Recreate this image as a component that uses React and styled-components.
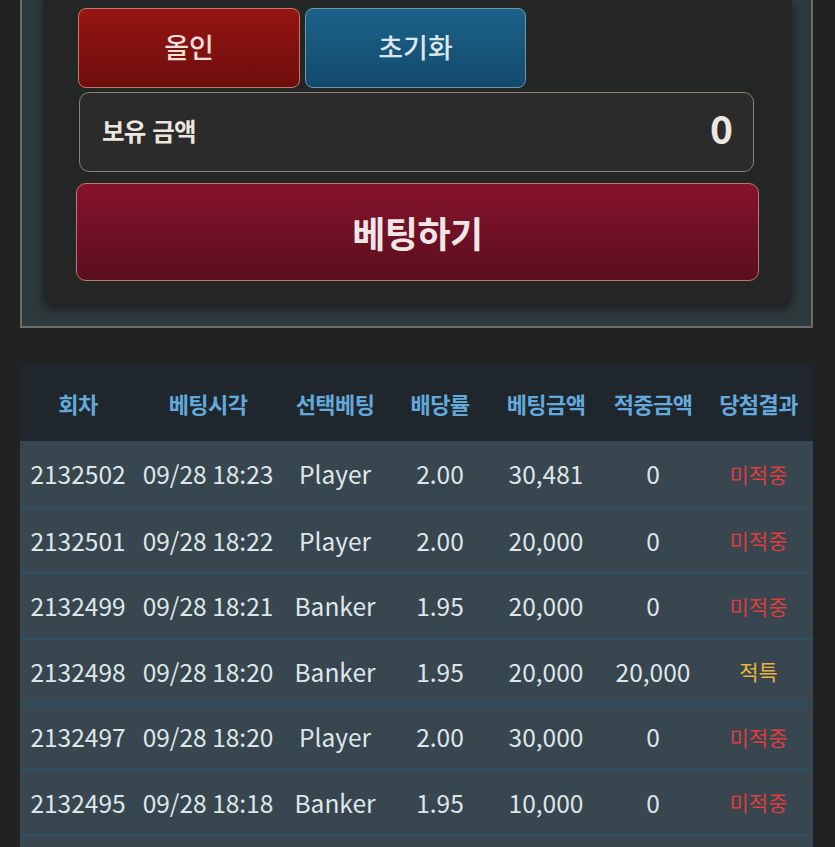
import React from "react";
import styled, { createGlobalStyle } from "styled-components";

const GlobalStyle = createGlobalStyle`
    html, body {
        margin: 0;
        padding: 0;
        background: #212322;
        font-family: "Noto Sans CJK KR", "Noto Sans", sans-serif;
        overflow: hidden;
    }
`;

const Page = styled.div`
    padding: 0 22px 0 20px;
`;

const OuterPanel = styled.div`
    background: #2f383b;
    border: 2px solid #6e6c68;
    border-top: none;
    padding: 0 19px 21px 21px;
`;

const InnerCard = styled.div`
    background: #232625;
    border-radius: 0 0 12px 12px;
    box-shadow: 0 4px 10px rgba(0, 0, 0, 0.45);
    padding: 8px 34px 24px 33px;
    display: flex;
    flex-direction: column;
`;

const ButtonRow = styled.div`
    display: flex;
    gap: 5px;
    padding-left: 2px;
`;

const SmallButton = styled.button`
    width: ${p => p.width}px;
    height: 80px;
    border-radius: 8px;
    border: 1.5px solid ${p => (p.variant === "red" ? "#c27a6e" : "#7397a8")};
    background: ${p =>
        p.variant === "red"
            ? "linear-gradient(180deg, #961512 0%, #6e0e0c 100%)"
            : "linear-gradient(180deg, #1c628a 0%, #124a6b 100%)"};
    color: ${p => (p.variant === "red" ? "#f4dfdb" : "#dbe6ec")};
    font-family: inherit;
    font-size: 27px;
    font-weight: 500;
    padding: 0;
    padding-bottom: 4px;
`;

const HoldingBox = styled.div`
    margin: 4px 4px 0 3px;
    height: 80px;
    box-sizing: border-box;
    border: 1.5px solid #8a8376;
    border-radius: 10px;
    background: #2a2b2a;
    display: flex;
    align-items: center;
    justify-content: space-between;
    padding: 0 20px 10px 22px;
    color: #ece6df;
`;

const HoldingLabel = styled.span`
    font-size: 24.5px;
    font-weight: 700;
    letter-spacing: -0.8px;
    word-spacing: 2px;
    margin-top: 6px;
`;

const HoldingValue = styled.span`
    font-size: 39px;
    font-weight: 700;
`;

const BetButton = styled.button`
    margin: 11px -1px 0 0;
    height: 98px;
    border-radius: 10px;
    border: 1.5px solid #b87a78;
    background: linear-gradient(180deg, #86132c 0%, #5a0e1e 100%);
    color: #efe7e7;
    font-family: inherit;
    font-size: 36px;
    font-weight: 700;
    letter-spacing: -0.5px;
`;

const Table = styled.div`
    margin-top: 37px;
`;

const COLUMNS = "116px 144px 110px 100px 112px 102px 109px";

const HeaderRow = styled.div`
    display: grid;
    grid-template-columns: ${COLUMNS};
    height: 76px;
    align-items: center;
    background: #1f272d;
`;

const HeaderCell = styled.div`
    text-align: center;
    color: #63a9dc;
    font-size: 22px;
    font-weight: 700;
    letter-spacing: -0.6px;
`;

const Row = styled.div`
    display: grid;
    grid-template-columns: ${COLUMNS};
    height: 65.5px;
    box-sizing: border-box;
    align-items: center;
    background: #37464f;

    & + & {
        border-top: 2px solid #2d5064;
    }
`;

const Cell = styled.div`
    text-align: center;
    color: #dfe6ea;
    font-size: 24.5px;
    white-space: nowrap;
`;

const ResultCell = styled(Cell)`
    font-size: 21px;
    color: ${p => (p.$hit ? "#e8b43a" : "#df3d3d")};
`;

const headers = ["회차", "베팅시각", "선택베팅", "배당률", "베팅금액", "적중금액", "당첨결과"];

const rows = [
    ["2132502", "09/28 18:23", "Player", "2.00", "30,481", "0", "미적중"],
    ["2132501", "09/28 18:22", "Player", "2.00", "20,000", "0", "미적중"],
    ["2132499", "09/28 18:21", "Banker", "1.95", "20,000", "0", "미적중"],
    ["2132498", "09/28 18:20", "Banker", "1.95", "20,000", "20,000", "적특"],
    ["2132497", "09/28 18:20", "Player", "2.00", "30,000", "0", "미적중"],
    ["2132495", "09/28 18:18", "Banker", "1.95", "10,000", "0", "미적중"],
];

export default function App() {
    return (
        <>
            <GlobalStyle />
            <Page>
                <OuterPanel>
                    <InnerCard>
                        <ButtonRow>
                            <SmallButton variant="red" width={222}>올인</SmallButton>
                            <SmallButton variant="blue" width={221}>초기화</SmallButton>
                        </ButtonRow>
                        <HoldingBox>
                            <HoldingLabel>보유 금액</HoldingLabel>
                            <HoldingValue>0</HoldingValue>
                        </HoldingBox>
                        <BetButton>베팅하기</BetButton>
                    </InnerCard>
                </OuterPanel>

                <Table>
                    <HeaderRow>
                        {headers.map(h => (
                            <HeaderCell key={h}>{h}</HeaderCell>
                        ))}
                    </HeaderRow>
                    {rows.map(r => (
                        <Row key={r[0]}>
                            {r.slice(0, 6).map((v, i) => (
                                <Cell key={i}>{v}</Cell>
                            ))}
                            <ResultCell $hit={r[6] === "적특"}>{r[6]}</ResultCell>
                        </Row>
                    ))}
                    {/* next row, scrolled below the fold */}
                    <Row />
                </Table>
            </Page>
        </>
    );
}
